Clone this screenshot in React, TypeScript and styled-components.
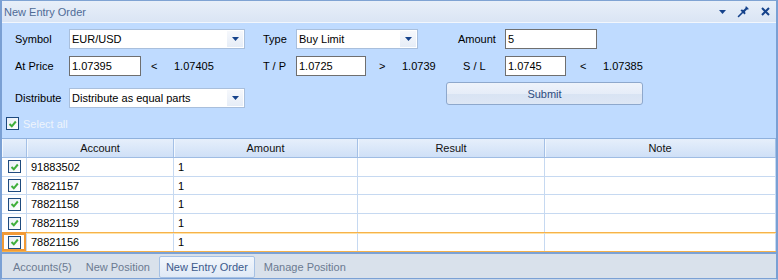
import styled, { createGlobalStyle, css } from 'styled-components';

const GlobalStyle = createGlobalStyle`
  html, body {
    margin: 0;
    padding: 0;
    background: #ffffff;
  }
  body {
    font-family: 'Liberation Sans', Arial, sans-serif;
    font-size: 11px;
    color: #000000;
  }
  * {
    box-sizing: border-box;
  }
`;

interface AccountRow {
  account: string;
  amount: string;
}

const ROWS: AccountRow[] = [
  { account: '91883502', amount: '1' },
  { account: '78821157', amount: '1' },
  { account: '78821158', amount: '1' },
  { account: '78821159', amount: '1' },
  { account: '78821156', amount: '1' },
];

const TABS = ['Accounts(5)', 'New Position', 'New Entry Order', 'Manage Position'];

function DropArrow() {
  return (
    <svg width="7" height="4" viewBox="0 0 7 4">
      <path d="M0 0 H7 L3.5 4 Z" fill="#15428b" />
    </svg>
  );
}

function PinIcon() {
  return (
    <svg width="13" height="13" viewBox="0 0 13 13">
      <path d="M1.5 11.5 L5.5 7.5" stroke="#15428b" strokeWidth="1.6" strokeLinecap="round" />
      <path
        d="M3.5 5.5 L7.5 9.5 L8.5 8.5 L8 6.5 L10 4.5 L11.5 4.5 L11.5 3.5 L9.5 1.5 L8.5 1.5 L8.5 3 L6.5 5 L4.5 4.5 Z"
        fill="#15428b"
      />
    </svg>
  );
}

function CloseIcon() {
  return (
    <svg width="9" height="9" viewBox="0 0 9 9">
      <path d="M1 1 L8 8 M8 1 L1 8" stroke="#15428b" strokeWidth="2" />
    </svg>
  );
}

function CheckBox() {
  return (
    <Style.CheckBox>
      <svg width="9" height="8" viewBox="0 0 9 8">
        <path d="M1.5 4 L3.8 6.3 L7.8 1.5" stroke="#3fae3a" strokeWidth="2" fill="none" />
      </svg>
    </Style.CheckBox>
  );
}

function Combo({ value, width }: { value: string; width: number }) {
  return (
    <Style.Combo $width={width}>
      <Style.ComboText>{value}</Style.ComboText>
      <Style.ComboButton>
        <DropArrow />
      </Style.ComboButton>
    </Style.Combo>
  );
}

function PriceGroup({
  price,
  inputWidth,
  sign,
  signGap,
  quote,
}: {
  price: string;
  inputWidth: number;
  sign: string;
  signGap: number;
  quote: string;
}) {
  return (
    <Style.PriceGroup>
      <Style.Input $width={inputWidth}>{price}</Style.Input>
      <Style.Sign $gap={signGap}>{sign}</Style.Sign>
      <span>{quote}</span>
    </Style.PriceGroup>
  );
}

export default function App() {
  return (
    <>
      <GlobalStyle />
      <Style.Window>
        <Style.TitleBar>
          <Style.Title>New Entry Order</Style.Title>
          <Style.TitleTools>
            <DropArrow />
            <PinIcon />
            <CloseIcon />
          </Style.TitleTools>
        </Style.TitleBar>

        <Style.Panel>
          <Style.Form>
            <Style.Label>Symbol</Style.Label>
            <Combo value="EUR/USD" width={176} />
            <Style.Label>Type</Style.Label>
            <Combo value="Buy Limit" width={122} />
            <Style.Label>Amount</Style.Label>
            <Style.Input $width={92}>5</Style.Input>

            <Style.Label>At Price</Style.Label>
            <PriceGroup price="1.07395" inputWidth={72} sign="<" signGap={10} quote="1.07405" />
            <Style.Label>T / P</Style.Label>
            <PriceGroup price="1.0725" inputWidth={70} sign=">" signGap={13} quote="1.0739" />
            <Style.Label $indent={5}>S / L</Style.Label>
            <PriceGroup price="1.0745" inputWidth={61} sign="<" signGap={14} quote="1.07385" />

            <Style.Label $lowered>Distribute</Style.Label>
            <Style.Lowered>
              <Combo value="Distribute as equal parts" width={176} />
            </Style.Lowered>
            <Style.SubmitButton>Submit</Style.SubmitButton>
          </Style.Form>

          <Style.SelectAll>
            <CheckBox />
            <span>Select all</span>
          </Style.SelectAll>
        </Style.Panel>

        <Style.Grid>
          <Style.HeaderRow>
            <Style.HeaderCell />
            <Style.HeaderCell>Account</Style.HeaderCell>
            <Style.HeaderCell>Amount</Style.HeaderCell>
            <Style.HeaderCell>Result</Style.HeaderCell>
            <Style.HeaderCell>Note</Style.HeaderCell>
          </Style.HeaderRow>
          {ROWS.map((row, index) => {
            const selected = index === ROWS.length - 1;
            return (
              <Style.Row key={row.account} $selected={selected}>
                <Style.CheckCell $focused={selected}>
                  <CheckBox />
                </Style.CheckCell>
                <Style.Cell>{row.account}</Style.Cell>
                <Style.Cell>{row.amount}</Style.Cell>
                <Style.Cell />
                <Style.Cell />
              </Style.Row>
            );
          })}
        </Style.Grid>

        <Style.TabBar>
          {TABS.map((tab) => (
            <Style.Tab key={tab} $active={tab === 'New Entry Order'}>
              {tab}
            </Style.Tab>
          ))}
        </Style.TabBar>
      </Style.Window>
    </>
  );
}

const gridColumns = css`
  display: grid;
  grid-template-columns: 25px 147px 184px 187px 1fr;
`;

const Style = {
  Window: styled.div`
    width: 778px;
    height: 280px;

    display: flex;
    flex-direction: column;

    border-top: 1px solid #7fa3d3;
    border-left: 2px solid #7aa0d4;
    border-right: 2px solid #7aa0d4;
    border-bottom: 1px solid #c9d7ea;
    background-color: #bfdbff;
    overflow: hidden;
  `,
  TitleBar: styled.div`
    height: 22px;
    flex-shrink: 0;

    display: flex;
    align-items: center;
    justify-content: space-between;

    padding: 0 6px 0 2px;
    border-bottom: 1px solid #f2f6fc;
    background: linear-gradient(#e8eff9, #dae5f4);
  `,
  Title: styled.span`
    color: #4f6b96;
    font-size: 11px;
  `,
  TitleTools: styled.div`
    display: flex;
    align-items: center;
    gap: 11px;

    svg:first-child {
      margin-top: 1px;
    }
  `,
  Panel: styled.div`
    height: 115px;
    flex-shrink: 0;

    display: flex;
    flex-direction: column;
  `,
  Form: styled.div`
    display: grid;
    grid-template-columns: 54px 194px 33px 162px 47px 138px;
    grid-template-rows: 27px 26px 26px;
    align-items: start;

    padding: 6px 0 0 13px;
  `,
  Label: styled.div<{ $indent?: number; $lowered?: boolean }>`
    height: 20px;
    line-height: 20px;
    padding-left: ${(props) => props.$indent ?? 0}px;
    margin-top: ${(props) => (props.$lowered ? '6px' : '0')};
    white-space: nowrap;
  `,
  Lowered: styled.div`
    margin-top: 6px;
  `,
  Combo: styled.div<{ $width: number }>`
    width: ${(props) => props.$width}px;
    height: 20px;

    display: flex;
    align-items: stretch;

    border: 1px solid #a9bfdc;
    background-color: #ffffff;
  `,
  ComboText: styled.div`
    flex: 1;
    line-height: 18px;
    padding-left: 2px;
    white-space: nowrap;
    overflow: hidden;
  `,
  ComboButton: styled.div`
    width: 16px;

    display: flex;
    align-items: center;
    justify-content: center;

    margin: 1px;
    background: linear-gradient(#f6f8fc, #e6edf7);
  `,
  Input: styled.div<{ $width: number }>`
    width: ${(props) => props.$width}px;
    height: 20px;
    line-height: 18px;

    padding-left: 2px;
    border: 1px solid #6f6f6f;
    background-color: #ffffff;
  `,
  PriceGroup: styled.div`
    display: flex;
    align-items: center;
    height: 20px;
    white-space: nowrap;
  `,
  Sign: styled.span<{ $gap: number }>`
    width: 23px;
    margin-left: ${(props) => props.$gap}px;
  `,
  SubmitButton: styled.div`
    grid-column: 4 / 7;
    justify-self: end;

    width: 197px;
    height: 23px;

    display: flex;
    align-items: center;
    justify-content: center;

    border: 1px solid #8ea8cc;
    border-radius: 3px;
    background: linear-gradient(#eef3fb 0%, #e6edf8 50%, #d8e3f3 51%, #dde7f5 100%);
    color: #2d4c80;
  `,
  SelectAll: styled.div`
    display: flex;
    align-items: center;
    gap: 4px;

    height: 13px;
    margin: 9px 0 0 4px;

    color: #eef4fc;
  `,
  CheckBox: styled.div`
    width: 13px;
    height: 13px;

    display: flex;
    align-items: center;
    justify-content: center;

    border: 1px solid #1e4a7e;
    background: linear-gradient(135deg, #e9eef5, #ffffff);
  `,
  Grid: styled.div`
    height: 114px;
    flex-shrink: 0;

    display: flex;
    flex-direction: column;

    border-top: 1px solid #8fb1dd;
    background-color: #ffffff;
  `,
  HeaderRow: styled.div`
    ${gridColumns};
    height: 19px;
    border-bottom: 1px solid #9fbce3;
    background: linear-gradient(#e6effb, #cfe0f7);
  `,
  HeaderCell: styled.div`
    display: flex;
    align-items: center;
    justify-content: center;

    border-right: 1px solid #a4c0e6;
    box-shadow: inset 1px 0 0 #f3f8fe;
    color: #111111;
  `,
  Row: styled.div<{ $selected: boolean }>`
    ${gridColumns};
    height: 19px;
    border-bottom: 1px solid ${(props) => (props.$selected ? '#f7b24a' : '#c6d9f1')};
    ${(props) =>
      props.$selected &&
      css`
        box-shadow: 0 -1px 0 #f7b24a, inset 0 1px 0 #ffe3a8, 0 1px 0 #fde8b4;
      `}
  `,
  Cell: styled.div`
    display: flex;
    align-items: center;

    padding-left: 4px;
    border-right: 1px solid #c6d9f1;
    white-space: nowrap;
  `,
  CheckCell: styled.div<{ $focused: boolean }>`
    display: flex;
    align-items: center;
    justify-content: center;

    border-right: 1px solid #c6d9f1;
    ${(props) =>
      props.$focused &&
      css`
        box-shadow: 0 -1px 0 #f29a36, inset 0 0 0 2px #f29a36;
      `}
  `,
  TabBar: styled.div`
    flex: 1;

    display: flex;
    align-items: flex-start;

    padding: 2px 0 0 4px;
    border-top: 2px solid #7ba1d5;
    border-bottom: 1px solid #7ba1d5;
    background-color: #d9e1eb;
  `,
  Tab: styled.div<{ $active: boolean }>`
    height: 22px;
    line-height: 20px;

    padding: 0 6px;
    border: 1px solid transparent;
    border-radius: 2px;
    color: #6b7a91;
    font-size: 11px;
    white-space: nowrap;

    ${(props) =>
      props.$active &&
      css`
        margin: 0 2px;
        border-color: #a6c1e4;
        background: linear-gradient(#f3f7fc, #dfe9f6);
        color: #3c5a8c;
      `}
  `,
};
